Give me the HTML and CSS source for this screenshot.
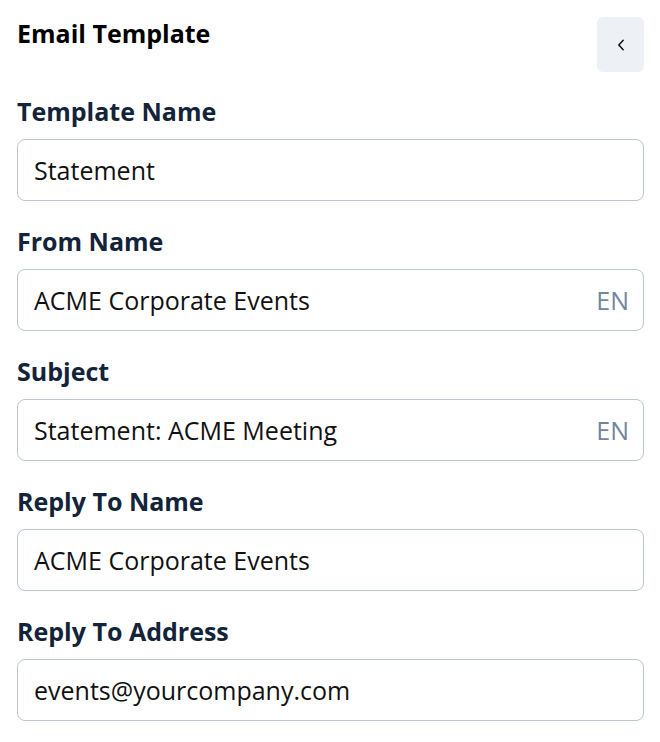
FILE: index.html
```html
<!DOCTYPE html>
<html lang="en">
<head>
<meta charset="utf-8">
<title>Email Template</title>
<link rel="stylesheet" href="styles.css">
</head>
<body>
<div class="panel">
  <div class="header">
    <h1 class="title">Email Template</h1>
    <button class="collapse" type="button" aria-label="Collapse">
      <svg width="10" height="12" viewBox="0 0 10 12" fill="none"><path d="M7.2 1.2 2.8 6l4.4 4.8" stroke="#111" stroke-width="1.5" stroke-linecap="round" stroke-linejoin="round"/></svg>
    </button>
  </div>
  <div class="field">
    <label class="label">Template Name</label>
    <div class="input"><span class="value">Statement</span></div>
  </div>
  <div class="field">
    <label class="label">From Name</label>
    <div class="input"><span class="value">ACME Corporate Events</span><span class="lang">EN</span></div>
  </div>
  <div class="field">
    <label class="label">Subject</label>
    <div class="input"><span class="value">Statement: ACME Meeting</span><span class="lang">EN</span></div>
  </div>
  <div class="field">
    <label class="label">Reply To Name</label>
    <div class="input"><span class="value">ACME Corporate Events</span></div>
  </div>
  <div class="field">
    <label class="label">Reply To Address</label>
    <div class="input"><span class="value">events@yourcompany.com</span></div>
  </div>
</div>
</body>
</html>
```
FILE: styles.css
```css
html, body {
  margin: 0;
  padding: 0;
  background: #ffffff;
}
body {
  font-family: "Open Sans", "Noto Sans", sans-serif;
}
.panel {
  padding: 17px 16px 0 17px;
}
.header {
  display: flex;
  justify-content: space-between;
  align-items: flex-start;
}
.title {
  margin: 0;
  font-size: 25px;
  line-height: 32px;
  font-weight: 700;
  color: #000000;
}
.collapse {
  width: 47px;
  height: 55px;
  border: none;
  border-radius: 6px;
  background: #edf0f5;
  display: flex;
  align-items: center;
  justify-content: center;
  padding: 0;
}
.field {
  display: flex;
  flex-direction: column;
}
.label {
  margin-top: 24px;
  margin-bottom: 12px;
  font-size: 25px;
  line-height: 32px;
  font-weight: 700;
  color: #12233a;
}
.header + .field .label {
  margin-top: 23px;
}
.input {
  display: flex;
  justify-content: space-between;
  align-items: center;
  border: 1px solid #b9c6d6;
  border-radius: 8px;
  padding: 14px 14px 14px 16px;
  font-size: 25px;
  line-height: 32px;
  color: #111111;
}
.lang {
  color: #71869e;
}
```
